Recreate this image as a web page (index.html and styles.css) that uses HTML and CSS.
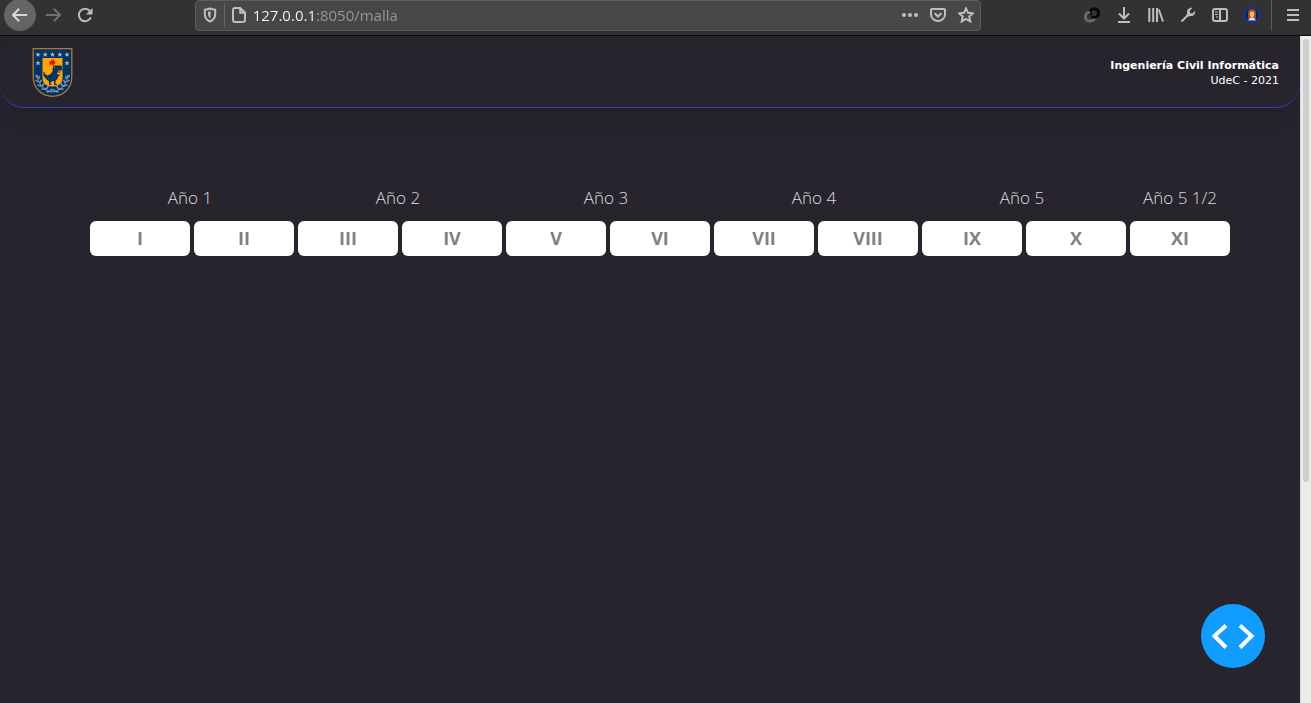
FILE: index.html
```html
<!DOCTYPE html>
<html lang="es">
<head>
<meta charset="utf-8">
<title>Malla</title>
<link rel="stylesheet" href="styles.css">
</head>
<body>
<nav class="toolbar" aria-label="Navegador">
  <button class="tool back" aria-label="Atrás"><svg class="icon" viewBox="0 0 16 16"><path d="M15.200 8H1.200M7.200 1.800 1 8l6.200 6.200"/></svg></button>
  <button class="tool forward" aria-label="Adelante"><svg class="icon" viewBox="0 0 16 16"><path d="M.8 8h14M8.800 1.800 15 8l-6.200 6.200"/></svg></button>
  <button class="tool reload" aria-label="Recargar"><svg class="icon" viewBox="0 0 16 16"><path d="M12.800 4A6.200 6.200 0 1 0 13.800 10.300"/><path class="solid" d="M15.500 1v6.500H9z"/></svg></button>
  <span class="spacer"></span>
  <div class="urlbar">
    <button class="inner shield" aria-label="Protección"><svg class="icon" viewBox="0 0 16 16"><path d="M8 1.500c2 .9 3.600 1.100 5.200 1.200V7c0 3.500-1.600 6-5.200 7.500C4.400 13 2.800 10.500 2.800 7V2.700C4.400 2.600 6 2.400 8 1.500z"/><path class="solid" d="M8.500 4v7.500c-1.800-1-2.500-2.900-2.500-5.200V4.700C7 4.600 7.500 4.400 8.500 4z"/></svg></button>
    <button class="inner page" aria-label="Información"><svg class="icon" viewBox="0 0 16 16"><path d="M4 1h5.300L14 5.700V13a2 2 0 0 1-2 2H4a2 2 0 0 1-2-2V3a2 2 0 0 1 2-2zM9.200 1v4.800H14"/></svg></button>
    <input class="address" type="text" aria-label="Dirección" value="127.0.0.1:8050/malla">
    <button class="inner" aria-label="Más"><svg class="icon" viewBox="0 0 16 16"><g class="solid"><circle cx="2" cy="8" r="2"/><circle cx="8" cy="8" r="2"/><circle cx="14" cy="8" r="2"/></g></svg></button>
    <button class="inner" aria-label="Pocket"><svg class="icon" viewBox="0 0 16 16"><path d="M2 2h12a1 1 0 0 1 1 1v4.500a7 6.500 0 0 1-14 0V3a1 1 0 0 1 1-1zM4.700 6.200 8 9.500l3.300-3.300"/></svg></button>
    <button class="inner" aria-label="Marcador"><svg class="icon" viewBox="0 0 16 16"><path d="m8 1.300 2 4.500 4.900.5-3.700 3.300 1.100 4.900L8 12l-4.300 2.500 1.100-4.900-3.700-3.300L6 5.800z"/></svg></button>
  </div>
  <span class="spacer"></span>
  <button class="tool" aria-label="Extensión"><svg class="icon" viewBox="0 0 16 16"><g class="thick"><path class="dark" d="M6 8V5.500A3.500 3.500 0 0 1 9.500 2H11a3.500 3.500 0 0 1 3.500 3.500v1A3.500 3.500 0 0 1 11 10"/><path class="dim" d="M6 5.500H5A3.500 3.500 0 0 0 1.500 9v1.500A3.500 3.500 0 0 0 5 14h2a3.500 3.500 0 0 0 3.500-3.500V8"/><path class="dark" d="M12 10H7.500"/></g></svg></button>
  <button class="tool" aria-label="Descargas"><svg class="icon" viewBox="0 0 16 16"><path d="M8 0v11M3 6.500 8 11.500l5-5M2 15h12"/></svg></button>
  <button class="tool" aria-label="Biblioteca"><svg class="icon" viewBox="0 0 16 16"><path d="M1.300 1v14M5.200 1v14M9 1v14M10.800 2.500l4.200 12"/></svg></button>
  <button class="tool" aria-label="Herramientas"><svg class="icon" viewBox="0 0 16 16"><path d="m1.500 14.500 7-7"/><path class="solid" d="M12.500.8C9.200.3 6.300 2.800 7.200 6l-.8 2 1.700 1.700 2-.8c3 .8 5.600-2 5-5.200l-2.800 2.800-2.200-.4-.4-2.300z"/></svg></button>
  <button class="tool" aria-label="Barra lateral"><svg class="icon" viewBox="0 0 16 16"><rect x="1" y="2" width="14" height="12" rx="2"/><path d="M8 2v12"/><path class="thin" d="M3 5h3M3 7.500h3M4 10h2"/></svg></button>
  <button class="tool" aria-label="Cuenta"><svg class="icon" viewBox="0 0 16 16"><circle cx="8" cy="8" r="7.300" fill="#06245f" stroke="#073bc4" stroke-width="1.200"/><path d="M4 12V6a4 4 0 0 1 8 0v6z" fill="#a6490f" stroke="none"/><ellipse cx="8" cy="7.300" rx="2.300" ry="3" fill="#f1b777" stroke="none"/><path d="M4 13.500 6.500 10.500h3l2.500 3z" fill="#dcdad5" stroke="none"/></svg></button>
  <span class="divider"></span>
  <button class="tool" aria-label="Menú"><svg class="icon" viewBox="0 0 16 16"><path d="M2 3h12M2 8h12M2 13h12"/></svg></button>
</nav>
<div class="viewport">
  <main class="content">
    <header class="banner">
      <svg class="crest" viewBox="0 0 40 49" role="img" aria-label="Escudo">
        <path d="M.7.700h38.600v28c0 11.500-8.300 19.600-19.300 19.600S.7 40.200.7 28.700z" fill="#003366" stroke="#b07a1c" stroke-width="1.300"/>
        <path d="M10 10h20v20c0 5-4 8.500-10 8.500S10 35 10 30z" fill="#ffa400"/>
        <defs><path id="star" d="m0-2.600.7 1.800h1.900L1.100.4l.6 1.900L0 1.200l-1.700 1.100.6-1.900-1.500-1.200h1.900z"/></defs>
        <g fill="#b3b9c6"><use href="#star" x="5.500" y="6.500"/><use href="#star" x="12.700" y="6.500"/><use href="#star" x="20" y="6.500"/><use href="#star" x="27.300" y="6.500"/><use href="#star" x="34.500" y="6.500"/><use href="#star" x="5.500" y="15"/><use href="#star" x="34.500" y="15"/></g>
        <path d="M17 16.500v-3l1.500-.5 1-1.200h1l.5-.8.500 1.500 1.200 1v2.500c-1.500 1-4.500 1-5.700.5z" fill="#e3141c"/>
        <path d="M20.500 17.500h8l1 1v4h-4v1h2.500v1h-3.500v1.800h2.500v2H25.500V30l-2.500 3v3h1.500v1H21.500v-4H20L18 35v1.200h1v.8h-2.500v-3.500L13 30.500 11 28v-4h.8l1.200 2.500 2 1 3-1.500 2-2.500z" fill="#053460"/>
        <path d="M21.500 18.800h1v1h-1z" fill="#ffa400"/>
        <g fill="none" stroke="#8192a5" stroke-width="1"><path d="M5 27c0 8 5 14 14 17M35 27c0 8-5 14-14 17"/><path stroke-width="1.500" d="m3 27 2 3M7 28l-1 3M3 32l3 2M9 32l-2 3M5 37l4 1M12 35l-3 4M9 41l4 0M16 38l-3 4M14 44l4-1M37 27l-2 3M33 28l1 3M37 32l-3 2M31 32l2 3M35 37l-4 1M28 35l3 4M31 41l-4 0M24 38l3 4M26 44l-4-1M18 41l4 3M22 41l-4 3"/></g>
      </svg>
      <div class="degree"><strong>Ingeniería Civil Informática</strong><span>UdeC - 2021</span></div>
    </header>
    <div class="plan">
      <section class="year"><h2>Año 1</h2><ol><li>I</li><li>II</li></ol></section>
      <section class="year"><h2>Año 2</h2><ol><li>III</li><li>IV</li></ol></section>
      <section class="year"><h2>Año 3</h2><ol><li>V</li><li>VI</li></ol></section>
      <section class="year"><h2>Año 4</h2><ol><li>VII</li><li>VIII</li></ol></section>
      <section class="year"><h2>Año 5</h2><ol><li>IX</li><li>X</li></ol></section>
      <section class="year half"><h2>Año 5 1/2</h2><ol><li>XI</li></ol></section>
    </div>
  </main>
  <div class="scrollbar"><div class="thumb"></div></div>
</div>
<button class="debug" aria-label="Herramientas de desarrollo"><svg viewBox="0 0 64 64"><path d="M25 21.500 13.500 32 25 43.500M39 21.500 50.500 32 39 43.500"/></svg></button>
</body>
</html>
```
FILE: styles.css
```css
* { box-sizing: border-box; }

body {
  margin: 0;
  height: 100vh;
  display: flex;
  flex-direction: column;
  background: #28242e;
  color: #fff;
  font-family: "Open Sans", "Noto Sans", sans-serif;
  overflow: hidden;
}

button {
  padding: 0;
  border: 0;
  background: none;
  color: inherit;
}

.toolbar {
  flex: none;
  display: flex;
  align-items: center;
  height: 36px;
  padding: 0 2px 5px 4px;
  background: #323234;
  border-bottom: 1px solid #0c0c0d;
  color: #bebebf;
}

.tool {
  flex: none;
  display: grid;
  place-items: center;
  width: 32px;
  height: 32px;
}

.back {
  border-radius: 50%;
  background: #656566;
  color: #d8d8d8;
}

.forward {
  margin: 0 1px;
  color: #717173;
}

.reload { width: 30px; }

.icon {
  display: block;
  width: 16px;
  height: 16px;
  fill: none;
  stroke: currentColor;
  stroke-width: 2;
}

.solid { fill: currentColor; stroke: none; }
.thin { stroke-width: 1; }
.thick { stroke-width: 3; }
.dim { stroke: #69696b; }
.dark { stroke: #080808; }

.spacer { flex: 95; }

.urlbar {
  flex: 787;
  display: flex;
  align-items: center;
  height: 31px;
  border: 1px solid #5c5c5e;
  border-radius: 4px;
  background: #474749;
}

.inner {
  flex: none;
  display: grid;
  place-items: center;
  width: 28px;
  height: 24px;
}

.shield {
  width: 29px;
  border-right: 1px solid #606872;
}

.address {
  flex: 1;
  min-width: 0;
  padding: 0;
  border: 0;
  background: linear-gradient(90deg, #f9f9fa 63px, #98989a 63px);
  background-clip: text;
  color: transparent;
  font: 15px/24px "Open Sans", sans-serif;
}

.divider {
  width: 1px;
  height: 32px;
  margin: 0 5px 0 3px;
  background: #5c5c5e;
}

.viewport {
  flex: 1;
  min-height: 0;
  display: flex;
}

.content {
  flex: 1;
  min-width: 0;
}

.banner {
  display: flex;
  align-items: center;
  justify-content: space-between;
  height: 72px;
  padding: 2px 21px 0 32px;
  border-bottom: 1px solid #2845b4;
  border-radius: 24px;
  box-shadow: 0 8px 20px rgba(20, 20, 30, 0.25);
}

.crest {
  width: 41px;
  height: 49px;
}

.degree {
  display: flex;
  flex-direction: column;
  text-align: right;
  font: 11px/15px "DejaVu Sans", sans-serif;
}

.plan {
  display: grid;
  grid-template-columns: repeat(11, 1fr);
  column-gap: 4px;
  padding: 77px 70px 0 90px;
}

.year { grid-column: span 2; }
.half { grid-column: span 1; }

h2 {
  margin: 0 0 10px;
  padding-right: 4px;
  text-align: center;
  font-size: 17px;
  line-height: 26px;
  font-weight: 300;
  color: #dededf;
}

.half h2 {
  padding-right: 0;
  white-space: nowrap;
}

ol {
  display: flex;
  gap: 4px;
  margin: 0;
  padding: 0;
  list-style: none;
}

li {
  flex: 1;
  border-radius: 6px;
  background: #fff;
  color: #808080;
  text-align: center;
  font-size: 18px;
  line-height: 35px;
  font-weight: 700;
}

.scrollbar {
  flex: none;
  width: 11px;
  padding: 3px 2px;
  border-left: 1px solid #d9d8d7;
  background: #edecea;
}

.thumb {
  height: 67%;
  border-radius: 4px;
  background: #cecece;
}

.debug {
  position: fixed;
  right: 46px;
  bottom: 35px;
  width: 64px;
  height: 64px;
  border-radius: 50%;
  background: #119dff;
}

.debug svg {
  display: block;
  fill: none;
  stroke: #fff;
  stroke-width: 4;
}
```
